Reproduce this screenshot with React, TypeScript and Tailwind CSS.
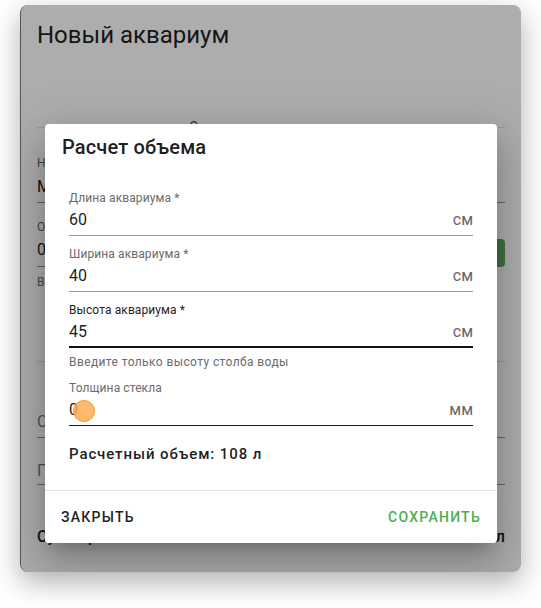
import React from "react";

type FieldProps = {
  label: string;
  value: string;
  suffix: string;
  state?: "idle" | "focused" | "hover";
  className?: string;
  touch?: boolean;
};

function Field({ label, value, suffix, state = "idle", className = "", touch }: FieldProps) {
  const labelColor = state === "focused" ? "text-[#1f1f1f]" : "text-[#6b6b6b]";
  const line =
    state === "focused"
      ? "border-b-2 border-[#111]"
      : state === "hover"
      ? "border-b border-[#1a1a1a]"
      : "border-b border-[#9a9a9a]";
  return (
    <div className={className}>
      <div className={`text-[12px] leading-[16px] tracking-[0.1px] ${labelColor}`}>{label}</div>
      <div className={`relative mt-[3px] flex h-[27px] justify-between text-[16px] leading-[22px] ${line}`}>
        <span className="text-[#1f1f1f]">{value}</span>
        <span className="text-[#666]">{suffix}</span>
        {touch && (
          <span className="absolute left-[4px] top-[1px] h-[22px] w-[22px] rounded-full border border-[#f49a30] bg-[#ffad52]/85" />
        )}
      </div>
    </div>
  );
}

export default function App() {
  return (
    <div className="min-h-[608px] bg-white pl-[20px] pt-[5px] font-['Roboto',sans-serif]">
      <div className="relative h-[567px] w-[501px] overflow-hidden rounded-lg border-l border-[#555] bg-white shadow-[0_10px_28px_rgba(0,0,0,0.32)]">
        {/* form underneath */}
        <div className="flex flex-col px-4 pt-[14px]">
          <h1 className="text-[24px] leading-[32px] text-[#1f1f1f]">Новый аквариум</h1>

          <div className="h-[77px] border-b border-[#e0e0e0]">
            <div className="ml-[152px] mt-[66px] text-[14px] leading-[20px] text-[#555]">Основные параметры</div>
          </div>

          <div className="mt-[27px] text-[12px] leading-[16px] text-[#666]">Название</div>
          <div className="mt-[5px] h-[27px] border-b border-[#949494] text-[16px] leading-[22px] text-[#1f1f1f]">
            Мой аквариум
          </div>

          <div className="mt-[16px] flex items-end gap-3">
            <div className="flex-1">
              <div className="text-[12px] leading-[16px] text-[#666]">Объем, л</div>
              <div className="mt-[4px] h-[28px] border-b border-[#949494] text-[16px] leading-[22px] text-[#1f1f1f]">
                0
              </div>
            </div>
            <div className="flex h-[28px] w-[110px] items-center justify-center rounded bg-[#5ea55e] text-[13px] font-medium tracking-[1px] text-white">
              РАССЧИТАТЬ
            </div>
          </div>

          <div className="mt-[7px] h-[88px] border-b border-[#e0e0e0]">
            <div className="text-[12px] leading-[16px] text-[#666]">Вид аквариума</div>
          </div>

          <div className="mt-[48px] h-[28px] border-b border-[#949494] text-[16px] leading-[24px] text-[#777]">
            Субстрат
          </div>
          <div className="mt-[21px] h-[26px] border-b border-[#949494] text-[16px] leading-[24px] text-[#777]">
            Подсветка
          </div>

          <div className="mt-[40px] flex justify-between text-[16px] font-medium leading-[24px] text-[#1f1f1f]">
            <span>Суммарный объем:</span>
            <span>0 л</span>
          </div>
        </div>

        {/* backdrop */}
        <div className="absolute inset-0 bg-black/[0.32]" />

        {/* dialog */}
        <div className="absolute left-[24px] top-[119px] flex h-[419px] w-[452px] flex-col rounded bg-white shadow-[0_11px_15px_-7px_rgba(0,0,0,0.2),0_24px_38px_3px_rgba(0,0,0,0.14),0_9px_46px_8px_rgba(0,0,0,0.12)]">
          <h2 className="px-[17px] pt-[7px] text-[20px] font-medium leading-[32px] tracking-[0.15px] text-[#1f1f1f]">
            Расчет объема
          </h2>
          <div className="flex-1 px-6 pt-[27px]">
            <Field label="Длина аквариума *" value="60" suffix="см" />
            <Field className="mt-[10px]" label="Ширина аквариума *" value="40" suffix="см" />
            <Field className="mt-[10px]" label="Высота аквариума *" value="45" suffix="см" state="focused" />
            <div className="mt-[6px] text-[12px] leading-[16px] tracking-[0.4px] text-[#6b6b6b]">
              Введите только высоту столба воды
            </div>
            <Field className="mt-[10px]" label="Толщина стекла" value="0" suffix="мм" state="hover" touch />
            <div className="mt-[18px] text-[15px] font-medium leading-[20px] tracking-[0.9px] text-[#1f1f1f]">
              Расчетный объем: 108 л
            </div>
          </div>
          <div className="flex h-[53px] items-center justify-between border-t border-[#e0e0e0] px-2">
            <button className="h-9 rounded px-2 text-[14px] font-medium tracking-[1.25px] text-[#1f1f1f]">
              ЗАКРЫТЬ
            </button>
            <button className="h-9 rounded px-2 text-[14px] font-medium tracking-[1.25px] text-[#4caf50]">
              СОХРАНИТЬ
            </button>
          </div>
        </div>
      </div>
    </div>
  );
}
